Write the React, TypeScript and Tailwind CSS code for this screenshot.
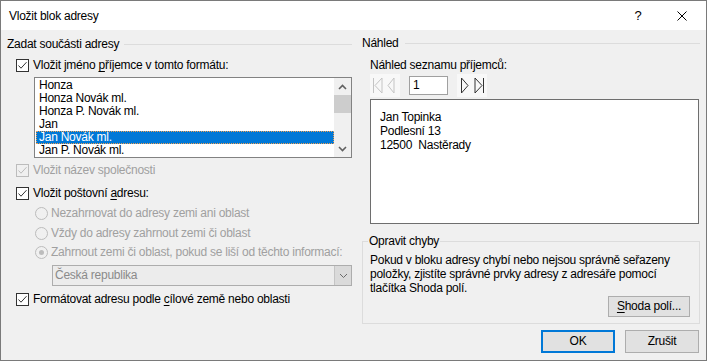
import React from "react";

function Check({ checked = true, disabled = false }: { checked?: boolean; disabled?: boolean }) {
  const c = disabled ? "#bcbcbc" : "#333333";
  return (
    <span
      className={
        "w-[13px] h-[13px] shrink-0 border flex items-center justify-center " +
        (disabled ? "border-[#bcbcbc] bg-[#f0f0f0]" : "border-[#333333] bg-white")
      }
    >
      {checked && (
        <svg width="11" height="11" viewBox="0 0 11 11">
          <path d="M1.5 5.5 L4 8.2 L9.5 2.2" fill="none" stroke={c} strokeWidth="1" />
        </svg>
      )}
    </span>
  );
}

function Radio({ checked = false }: { checked?: boolean }) {
  return (
    <span className="w-[13px] h-[13px] shrink-0 rounded-full border border-[#bcbcbc] bg-[#f0f0f0] flex items-center justify-center">
      {checked && <span className="w-[5px] h-[5px] rounded-full bg-[#bcbcbc]" />}
    </span>
  );
}

const items = ["Honza", "Honza Novák ml.", "Honza P. Novák ml.", "Jan", "Jan Novák ml.", "Jan P. Novák ml."];

export default function App() {
  return (
    <div className="w-[707px] h-[361px] border border-[#7a7a7a] bg-[#f0f0f0] flex flex-col text-[12px] tracking-[-0.25px] text-black font-['Liberation_Sans',Arial,sans-serif] overflow-hidden whitespace-nowrap">
      {/* Title bar */}
      <div className="h-[29px] bg-white flex items-center shrink-0">
        <span className="pl-[8px] leading-[16px]">Vložit blok adresy</span>
        <span className="ml-auto w-[20px] text-center text-[13px] leading-[16px]">?</span>
        <span className="ml-[29px] mr-[19px] w-[10px] h-[10px] flex">
          <svg width="10" height="10" viewBox="0 0 10 10">
            <path d="M0.5 0.5 L9.5 9.5 M9.5 0.5 L0.5 9.5" stroke="#000" strokeWidth="1" />
          </svg>
        </span>
      </div>

      {/* Body */}
      <div className="flex-1 flex pl-[6px]">
        {/* Left column */}
        <div className="w-[345px] flex flex-col pt-[6px]">
          <div className="h-[16px] flex items-center">
            <span className="leading-[16px]">Zadat součásti adresy</span>
            <span className="flex-1 h-px bg-[#dcdcdc] ml-[5px]" />
          </div>
          <div className="mt-[5px] h-[16px] flex items-center pl-[9px] gap-[4px]">
            <Check />
            <span className="leading-[16px]">
              Vložit jméno <span className="underline underline-offset-2">p</span>říjemce v tomto formátu:
            </span>
          </div>
          {/* Listbox */}
          <div className="mt-[4px] ml-[27px] w-[318px] h-[81px] border border-[#828282] bg-white flex">
            <div className="flex-1 pt-[1px] pl-[1px] flex flex-col">
              {items.map((t) => {
                const sel = t === "Jan Novák ml.";
                return (
                  <div
                    key={t}
                    className={
                      "h-[13px] " +
                      (sel
                        ? "bg-[#0078d7] text-white border border-dotted border-[#f0a050] pl-[2px] leading-[11px]"
                        : "leading-[13px] pl-[3px]")
                    }
                  >
                    {t}
                  </div>
                );
              })}
            </div>
            <div className="w-[17px] bg-[#f0f0f0] flex flex-col">
              <div className="h-[17px] flex items-center justify-center">
                <svg width="9" height="6" viewBox="0 0 9 6">
                  <path d="M1 5 L4.5 1.5 L8 5" fill="none" stroke="#606060" strokeWidth="1.6" />
                </svg>
              </div>
              <div className="h-[18px] bg-[#cdcdcd]" />
              <div className="flex-1" />
              <div className="h-[17px] flex items-center justify-center">
                <svg width="9" height="6" viewBox="0 0 9 6">
                  <path d="M1 1 L4.5 4.5 L8 1" fill="none" stroke="#606060" strokeWidth="1.6" />
                </svg>
              </div>
            </div>
          </div>
          <div className="mt-[4px] h-[16px] flex items-center pl-[9px] gap-[4px] text-[#a0a0a0]">
            <Check disabled />
            <span className="leading-[16px]">Vložit název společnosti</span>
          </div>
          <div className="mt-[7px] h-[16px] flex items-center pl-[9px] gap-[4px]">
            <Check />
            <span className="leading-[16px]">
              Vložit poštovní <span className="underline underline-offset-2">a</span>dresu:
            </span>
          </div>
          <div className="mt-[4px] h-[16px] flex items-center pl-[28px] gap-[3px] text-[#a0a0a0]">
            <Radio />
            <span className="leading-[16px]">Nezahrnovat do adresy zemi ani oblast</span>
          </div>
          <div className="mt-[4px] h-[16px] flex items-center pl-[28px] gap-[3px] text-[#a0a0a0]">
            <Radio />
            <span className="leading-[16px]">Vždy do adresy zahrnout zemi či oblast</span>
          </div>
          <div className="mt-[3px] h-[16px] flex items-center pl-[28px] gap-[3px] text-[#a0a0a0]">
            <Radio checked />
            <span className="leading-[16px]">Zahrnout zemi či oblast, pokud se liší od těchto informací:</span>
          </div>
          {/* Select */}
          <div className="mt-[5px] ml-[45px] w-[300px] h-[21px] border border-[#adadad] bg-[#ececec] flex">
            <span className="flex-1 pl-[2px] leading-[19px] text-[#8a8a8a]">Česká republika</span>
            <span className="w-[17px] bg-[#dadada] border-l border-[#c4c4c4] flex items-center justify-center">
              <svg width="9" height="6" viewBox="0 0 9 6">
                <path d="M1 1 L4.5 4.5 L8 1" fill="none" stroke="#6a6a6a" strokeWidth="1" />
              </svg>
            </span>
          </div>
          <div className="mt-[5px] h-[16px] flex items-center pl-[9px] gap-[4px]">
            <Check />
            <span className="leading-[16px]">
              Formátovat adresu podle <span className="underline underline-offset-2">c</span>ílové země nebo oblasti
            </span>
          </div>
        </div>

        {/* Right column */}
        <div className="ml-[10px] w-[338px] flex flex-col pt-[5px]">
          <div className="h-[16px] flex items-center">
            <span className="leading-[16px]">Náhled</span>
            <span className="flex-1 h-px bg-[#dcdcdc] ml-[6px]" />
          </div>
          <div className="mt-[6px] h-[16px] pl-[8px] leading-[16px]">Náhled seznamu příjemců:</div>
          <div className="mt-[1px] h-[23px] pl-[8px] flex items-start">
            <span className="w-[30px] h-[23px] bg-[#f8f8f8] flex">
              <svg width="30" height="23" viewBox="0 0 30 23">
                <path d="M3.5 4 L3.5 19 M12 4 L5 11.5 L12 19 Z M24 4 L18 11.5 L24 19 Z" fill="none" stroke="#c4c4c4" strokeWidth="1" />
              </svg>
            </span>
            <span className="ml-[9px] mt-[2px] w-[39px] h-[19px] border border-[#a0a0a0] bg-white pl-[3px] leading-[17px]">1</span>
            <span className="ml-[9px] w-[30px] h-[23px] bg-[#f8f8f8] flex">
              <svg width="30" height="23" viewBox="0 0 30 23">
                <path d="M4.5 4 L11 11.5 L4.5 19 Z M18 4 L25 11.5 L18 19 Z M26.5 4 L26.5 19" fill="none" stroke="#333" strokeWidth="1" />
              </svg>
            </span>
          </div>
          <div className="mt-[2px] ml-[8px] w-[329px] h-[125px] border border-[#6e6e6e] bg-white pt-[10px] pl-[9px]">
            <div className="leading-[14px]">Jan Topinka</div>
            <div className="leading-[14px]">Podlesní 13</div>
            <div className="leading-[14px] whitespace-pre">12500  Nastěrady</div>
          </div>
          <fieldset className="mt-[9px] w-[338px] h-[91px] border border-[#dcdcdc] px-[7px] flex flex-col">
            <legend className="ml-[-2px] px-[1px] leading-[16px]">Opravit chyby</legend>
            <div className="leading-[14px] mt-[4px]">
              Pokud v bloku adresy chybí nebo nejsou správně seřazeny
              <br />
              položky, zjistíte správné prvky adresy z adresáře pomocí
              <br />
              tlačítka Shoda polí.
            </div>
            <div className="flex justify-end mt-[1px] pr-[2px]">
              <button className="w-[82px] h-[21px] border border-[#adadad] bg-[#e1e1e1] leading-[19px] text-center">
                <span className="underline underline-offset-2">S</span>hoda polí...
              </button>
            </div>
          </fieldset>
          <div className="mt-[6px] flex justify-end gap-[10px] pr-[1px]">
            <button className="w-[74px] h-[23px] border-2 border-[#0078d7] bg-[#e1e1e1] leading-[19px] text-center">OK</button>
            <button className="w-[74px] h-[23px] border border-[#adadad] bg-[#e1e1e1] leading-[21px] text-center">Zrušit</button>
          </div>
        </div>
      </div>
    </div>
  );
}
